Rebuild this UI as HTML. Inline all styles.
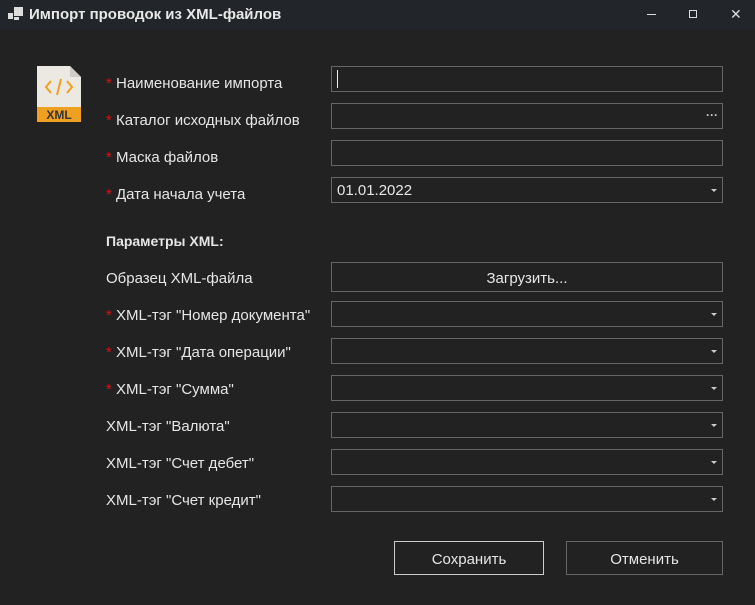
<html><head><style>
body{margin:0;width:755px;height:605px;background:#222222;font-family:"Liberation Sans",sans-serif;color:#e6e6e6;font-size:15px;overflow:hidden;position:relative}
.tb{position:absolute;left:0;top:0;width:755px;height:30px;background:#22252a}
.t{position:absolute;left:29px;top:6px;font-weight:bold;font-size:15px;color:#e8e8e8}
.l{position:absolute;left:106px;line-height:24px}
.s{color:#e01010}
.f{position:absolute;left:331px;width:390px;height:24px;border:1px solid #666;background:#222}
.dd::after{content:"";position:absolute;right:5px;top:11px;border-left:3px solid transparent;border-right:3px solid transparent;border-top:3px solid #ccc}
.b{position:absolute;height:32px;border:1px solid #666;text-align:center;line-height:35px;background:#222}
</style></head><body>
<div class="tb">
<div style="position:absolute;left:8px;top:13px;width:5px;height:6px;background:#ddd"></div>
<div style="position:absolute;left:14px;top:7px;width:9px;height:9px;background:#ddd"></div>
<div style="position:absolute;left:14px;top:17px;width:5px;height:3px;background:#ddd"></div>
<div class="t">Импорт проводок из XML-файлов</div>
<div style="position:absolute;left:647px;top:14px;width:9px;height:1px;background:#ddd"></div>
<div style="position:absolute;left:689px;top:10px;width:6px;height:6px;border:1px solid #ddd"></div>
<div style="position:absolute;left:730px;top:6px;font-size:14px;color:#ddd">✕</div>
</div>
<svg style="position:absolute;left:37px;top:66px" width="45" height="56"><path d="M0 0H33L44 11V56H0Z" fill="#ebe9e2"/><path d="M33 0V11H44Z" fill="#cfcdc6"/><rect x="0" y="41" width="44" height="15" fill="#f0a020"/><text x="22" y="53" text-anchor="middle" font-family="Liberation Sans" font-size="12" font-weight="bold" fill="#333">XML</text><path d="M14 15L9 21L14 27M30 15L35 21L30 27M24 13L20 29" stroke="#f0a020" stroke-width="2" fill="none"/></svg>
<div class="l" style="top:72px"><span class="s">*</span> Наименование импорта</div>
<div class="l" style="top:109px"><span class="s">*</span> Каталог исходных файлов</div>
<div class="l" style="top:146px"><span class="s">*</span> Маска файлов</div>
<div class="l" style="top:183px"><span class="s">*</span> Дата начала учета</div>
<div class="l" style="top:229px;font-weight:bold;font-size:14px">Параметры XML:</div>
<div class="l" style="top:267px">Образец XML-файла</div>
<div class="l" style="top:304px"><span class="s">*</span> XML-тэг "Номер документа"</div>
<div class="l" style="top:341px"><span class="s">*</span> XML-тэг "Дата операции"</div>
<div class="l" style="top:378px"><span class="s">*</span> XML-тэг "Сумма"</div>
<div class="l" style="top:415px">XML-тэг "Валюта"</div>
<div class="l" style="top:452px">XML-тэг "Счет дебет"</div>
<div class="l" style="top:489px">XML-тэг "Счет кредит"</div>
<div class="f" style="top:66px"><div style="position:absolute;left:5px;top:3px;width:1px;height:18px;background:#eee"></div></div>
<div class="f" style="top:103px"><span style="position:absolute;right:4px;top:4px;font-size:12px;font-weight:bold;color:#ccc">···</span></div>
<div class="f" style="top:140px"></div>
<div class="f dd" style="top:177px"><span style="position:absolute;left:5px;top:4px">01.01.2022</span></div>
<div class="b" style="left:331px;top:262px;width:390px;height:28px;line-height:31px">Загрузить...</div>
<div class="f dd" style="top:301px"></div>
<div class="f dd" style="top:338px"></div>
<div class="f dd" style="top:375px"></div>
<div class="f dd" style="top:412px"></div>
<div class="f dd" style="top:449px"></div>
<div class="f dd" style="top:486px"></div>
<div class="b" style="left:394px;top:541px;width:148px;border-color:#ccc">Сохранить</div>
<div class="b" style="left:566px;top:541px;width:155px">Отменить</div>
</body></html>
